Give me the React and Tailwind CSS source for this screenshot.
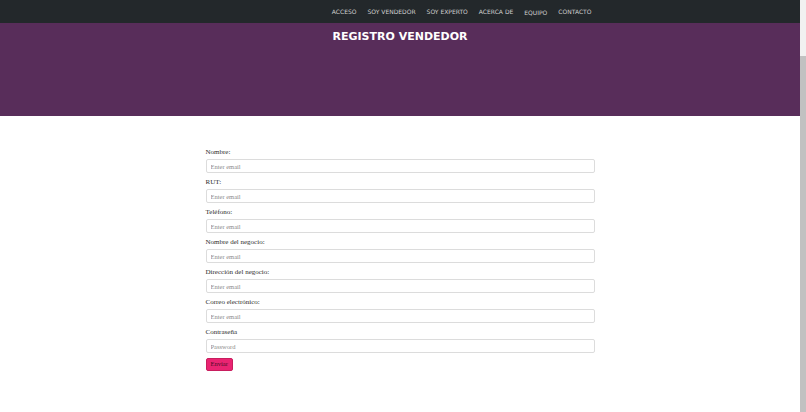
export default function App() {
  const fields = [
    { label: "Nombre:", placeholder: "Enter email" },
    { label: "RUT:", placeholder: "Enter email" },
    { label: "Teléfono:", placeholder: "Enter email" },
    { label: "Nombre del negocio:", placeholder: "Enter email" },
    { label: "Dirección del negocio:", placeholder: "Enter email" },
    { label: "Correo electrónico:", placeholder: "Enter email" },
    { label: "Contraseña", placeholder: "Password", type: "password" },
  ];

  const links = ["ACCESO", "SOY VENDEDOR", "SOY EXPERTO", "ACERCA DE", "EQUIPO", "CONTACTO"];

  return (
    <div className="flex h-[412px] w-[806px] overflow-hidden bg-white">
      <div className="flex-1 flex flex-col">
        {/* Navbar */}
        <nav className="h-[23px] bg-[#23282b] flex items-center">
          <ul
            className="w-[389px] mx-auto flex justify-end gap-[11px] pr-[3px] text-[6px] text-[#d0d0d0]"
            style={{ fontFamily: '"DejaVu Sans", sans-serif' }}
          >
            {links.map((l) => (
              <li key={l} className={l === "EQUIPO" ? "mt-[1px]" : ""}>
                {l}
              </li>
            ))}
          </ul>
        </nav>

        {/* Hero */}
        <header className="h-[93px] bg-[#582d5a] pt-[7px]">
          <h1
            className="text-center text-white font-bold text-[11px] leading-[13px]"
            style={{ fontFamily: '"DejaVu Sans", sans-serif' }}
          >
            REGISTRO VENDEDOR
          </h1>
        </header>

        {/* Form */}
        <form
          className="w-[389px] mx-auto pt-[32px]"
          style={{ fontFamily: '"Liberation Serif", serif' }}
          onSubmit={(e) => e.preventDefault()}
        >
          {fields.map((f) => (
            <div key={f.label} className="mb-[5px]">
              <label className="block text-[7px] leading-[9px] mb-[2px] text-[#2c2c2c] font-medium">{f.label}</label>
              <input
                type={f.type || "email"}
                placeholder={f.placeholder}
                className="block w-full h-[14px] px-[4px] text-[6.5px] border border-[#dcdcdc] rounded-[2px] bg-white placeholder:text-[#8a8a8a] outline-none"
              />
            </div>
          ))}
          <button
            type="submit"
            className="block mt-[1px] h-[13px] px-[4px] text-[6.5px] leading-none bg-[#ea2472] border border-[#c81e5e] rounded-[2px] text-[#4a0c28]"
          >
            Enviar
          </button>
        </form>
      </div>

      {/* Scrollbar */}
      <div className="w-[6px] bg-[#f1f1f1] flex flex-col">
        <div className="h-[56px]" />
        <div className="flex-1 bg-[#c1c1c1]" />
      </div>
    </div>
  );
}
